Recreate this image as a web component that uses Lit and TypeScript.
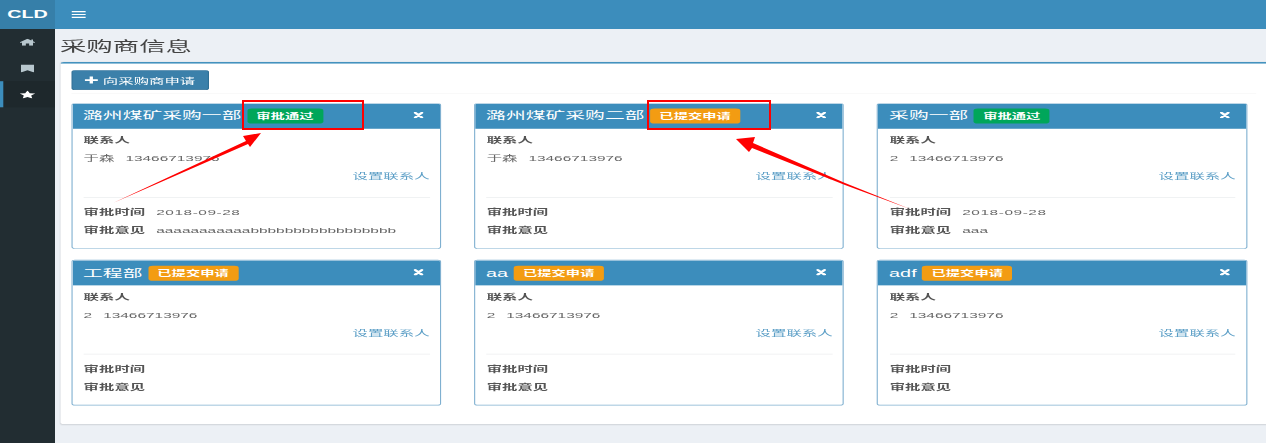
import { LitElement, html, css, svg } from "lit";
import { customElement } from "lit/decorators.js";

interface Card { name: string; ok: boolean; person: string; time?: string; note?: string; }

const cards: Card[] = [
  { name: "潞州煤矿采购一部", ok: true, person: "于森", time: "2018-09-28", note: "aaaaaaaaaaabbbbbbbbbbbbbbbbb" },
  { name: "潞州煤矿采购二部", ok: false, person: "于森" },
  { name: "采购一部", ok: true, person: "2", time: "2018-09-28", note: "aaa" },
  { name: "工程部", ok: false, person: "2" },
  { name: "aa", ok: false, person: "2" },
  { name: "adf", ok: false, person: "2" },
];

@customElement("app-root")
export class AppRoot extends LitElement {
  static styles = css`
    :host { display: block; position: relative; width: 1266px; height: 443px; overflow: hidden; background: #ecf0f5; }
    .stage {
      width: 1151px; height: 764px; transform: scale(1.1, 0.58); transform-origin: 0 0;
      display: grid; grid-template-columns: 50px 1fr; grid-template-rows: 50px 1fr;
      font: 14px "Liberation Sans", "Noto Sans CJK SC", sans-serif; color: #666; background: #ecf0f5;
    }
    .logo { background: #367fa9; color: #fff; font-weight: 700; font-size: 18px; display: flex; align-items: center; justify-content: center; }
    .top { background: #3c8dbc; display: flex; align-items: center; padding-left: 15px; }
    .side { background: #222d32; display: flex; flex-direction: column; }
    .nav { height: 45px; box-sizing: border-box; padding-right: 4px; display: flex; align-items: center; justify-content: center; color: #b8c7ce; border-left: 3px solid transparent; }
    .nav.on { background: #1e282c; border-left-color: #3c8dbc; color: #fff; }
    .main { min-width: 0; }
    .heading { height: 57px; box-sizing: border-box; padding: 0 0 3px 4.5px; display: flex; align-items: center; margin: 0; font-size: 24px; font-weight: 400; color: #444; }
    .box { margin-left: 5px; height: 624px; box-sizing: border-box; background: #fff; border-top: 3px solid #3c8dbc; box-shadow: 0 1px 2px rgba(0,0,0,.12); border-radius: 3px 0 0 3px; padding: 0 9.5px; }
    .bar { height: 52px; box-sizing: border-box; padding-top: 11px; border-bottom: 1px solid #f4f4f4; margin-bottom: 15.5px; }
    .btn { height: 34px; width: 125px; box-sizing: border-box; border: 1px solid #2f6f95; border-radius: 3px; background: #3b80aa; color: #fff; display: flex; align-items: center; justify-content: center; gap: 5px; font: inherit; padding: 0; }
    .grid { display: grid; grid-template-columns: repeat(3, 336.5px); column-gap: 29.9px; row-gap: 19.7px; }
    .card { height: 251px; box-sizing: border-box; border: 1px solid #7fb0d0; border-radius: 3px; background: #fff; overflow: hidden; }
    .head { height: 43px; box-sizing: border-box; background: #3c8dbc; color: #fff; display: flex; align-items: center; padding: 0 15px 0 10px; font-size: 18px; }
    .name { line-height: 1; }
    .badge { margin-left: 5px; height: 26px; border-radius: 4px; padding: 0 8.5px; display: flex; align-items: center; font-size: 13px; font-weight: 700; color: #fff; }
    .ok { background: #00a65a; }
    .wait { background: #f39c12; }
    .x { margin-left: auto; display: flex; margin-top: -3px; }
    .body { padding: 5px 9.5px 0 10.5px; line-height: 31px; }
    .line { height: 31px; white-space: nowrap; }
    .b { font-weight: 700; color: #555; }
    .gap { margin-left: 10px; }
    .date { letter-spacing: .5px; }
    .link { text-align: right; color: #5b9ec6; }
    .rule { border-top: 1px solid #e6e8ea; margin: 20px 0 10.5px; }
    svg { display: block; }
    .marks { position: absolute; left: 0; top: 0; pointer-events: none; }
  `;

  private card(c: Card) {
    return html`<div class="card">
      <div class="head">
        <span class="name">${c.name}</span>
        <span class="badge ${c.ok ? "ok" : "wait"}">${c.ok ? "审批通过" : "已提交申请"}</span>
        <span class="x"><svg width="9" height="11" viewBox="0 0 9 11"><path d="M1.500 1.500 L7.500 9.500 M7.500 1.500 L1.500 9.500" stroke="#fff" stroke-width="3" stroke-linecap="round"/></svg></span>
      </div>
      <div class="body">
        <div class="line b">联系人</div>
        <div class="line">${c.person}<span class="gap">13466713976</span></div>
        <div class="line link">设置联系人</div>
        <div class="rule"></div>
        <div class="line"><span class="b">审批时间</span>${c.time ? html`<span class="gap date">${c.time}</span>` : ""}</div>
        <div class="line"><span class="b">审批意见</span>${c.note ? html`<span class="gap">${c.note}</span>` : ""}</div>
      </div>
    </div>`;
  }

  render() {
    return html`
      <div class="stage">
        <div class="logo">CLD</div>
        <div class="top"><svg width="13" height="14" viewBox="0 0 13 14"><path d="M0 2h13M0 7h13M0 12h13" stroke="#fff" stroke-width="2"/></svg></div>
        <div class="side">
          <div class="nav"><svg width="14" height="12" viewBox="0 0 14 12"><path fill="currentColor" d="M7 0 L10.500 2.800 V1 H12 V4 L14 6 L13 7 L12 6.200 V12 H8.500 V8 H5.500 V12 H2 V6.200 L1 7 L0 6Z"/></svg></div>
          <div class="nav"><svg width="12" height="14" viewBox="0 0 12 14"><path fill="currentColor" d="M0 0h12v14L6 10 0 14Z"/></svg></div>
          <div class="nav on"><svg width="14" height="14" viewBox="0 0 20 20"><path fill="currentColor" d="M10 0l3 6.800 7 .8-5.200 4.800 1.400 7.400L10 16.200 3.800 20l1.400-7.600L0 7.600l7-.8Z"/></svg></div>
        </div>
        <div class="main">
          <h1 class="heading">采购商信息</h1>
          <div class="box">
            <div class="bar"><button class="btn"><svg width="12" height="14" viewBox="0 0 12 14"><path d="M6 1v12M0 7h12" stroke="#fff" stroke-width="3"/></svg>向采购商申请</button></div>
            <div class="grid">${cards.map((c) => this.card(c))}</div>
          </div>
        </div>
      </div>
      <svg class="marks" width="1266" height="443" viewBox="0 0 1266 443">
        ${svg`<rect x="243" y="101" width="120" height="28" fill="none" stroke="#f00" stroke-width="2"/>
        <rect x="648" y="101" width="122" height="28" fill="none" stroke="#f00" stroke-width="2"/>
        <polygon fill="#f00" points="113,203 246,141 243,136 261,133 250,147 248,144"/>
        <polygon fill="#f00" points="910,209 845,185 752,148 749,152 736,139 755,137 753,143 845,183"/>`}
      </svg>`;
  }
}
